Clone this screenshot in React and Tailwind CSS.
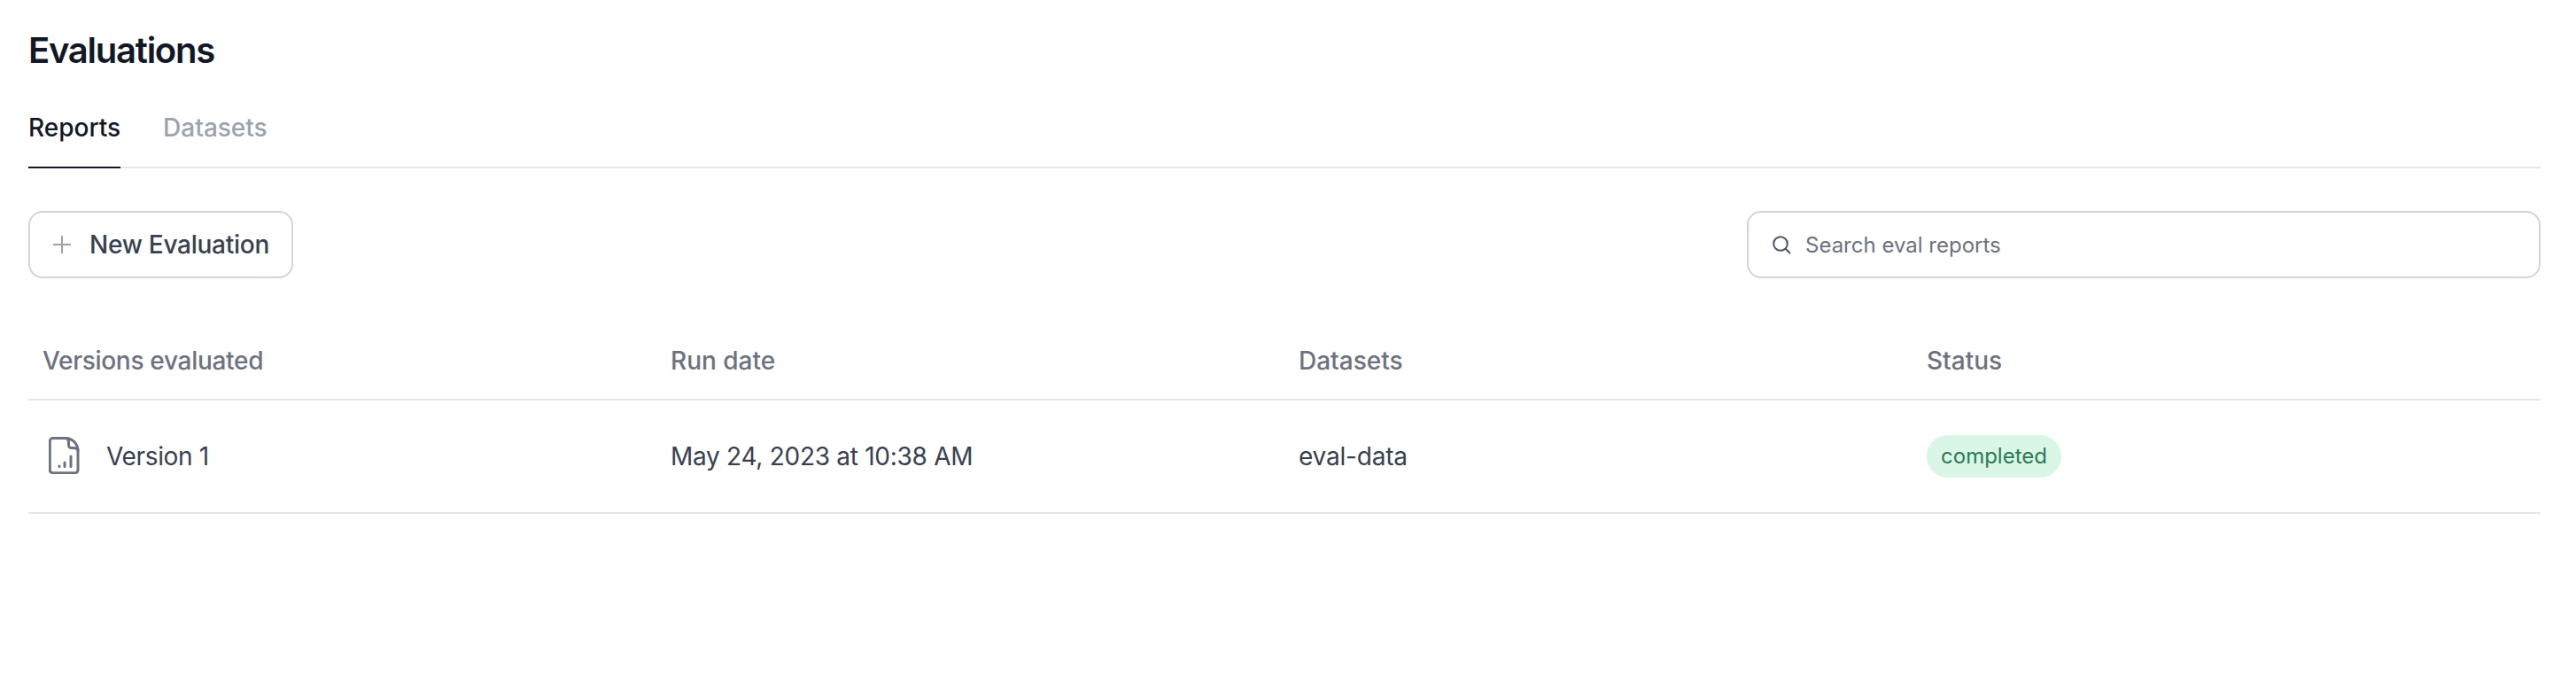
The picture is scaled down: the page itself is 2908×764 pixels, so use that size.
export default function App() {
  return (
    <div className="min-h-[764px] bg-white pl-8 pr-10 font-['Inter',sans-serif]">
      <h1 className="pt-[33px] text-[40px] font-semibold leading-[48px] tracking-[-1.25px] text-[#111827]">Evaluations</h1>

      <div className="mt-[31px] flex h-[78px] gap-12 border-b-2 border-[#e5e7eb]">
        <div className="h-[78px] border-b-2 border-[#111827] pt-[14px] text-[28px] font-medium leading-[36px] text-[#111827]">Reports</div>
        <div className="pt-[14px] text-[28px] font-medium leading-[36px] text-[#9ca3af]">Datasets</div>
      </div>

      <div className="mt-[48px] flex items-center justify-between">
        <button className="flex h-[76px] w-[299px] items-center gap-[19px] rounded-2xl border-2 border-[#d1d5db] bg-white pl-6 text-[28px] font-medium tracking-[-0.26px] text-[#374151]">
          <svg width="24" height="24" viewBox="0 0 24 24" fill="none" stroke="#9ca3af" strokeWidth="2">
            <path d="M12 2v20M2 12h20" />
          </svg>
          New Evaluation
        </button>
        <div className="flex h-[76px] w-[896px] items-center gap-4 rounded-2xl border-2 border-[#d1d5db] bg-white pl-[26px] text-[24px] text-[#6b7280]">
          <svg width="22" height="22" viewBox="0 0 22 22" fill="none" stroke="#4b5563" strokeWidth="2" strokeLinecap="round">
            <circle cx="10" cy="10" r="7.8" />
            <path d="M15.800 15.800 20.500 20.500" />
          </svg>
          <span className="pt-[2px]">Search eval reports</span>
        </div>
      </div>

      <div className="mt-[44px] grid h-[94px] grid-cols-4 items-center border-b-2 border-[#e5e7eb] pt-[6px] text-[28px] font-medium text-[#6b7280]">
        <div className="pl-4 tracking-[-0.3px]">Versions evaluated</div>
        <div className="pl-4">Run date</div>
        <div className="pl-4">Datasets</div>
        <div className="pl-4">Status</div>
      </div>

      <div className="grid h-[128px] grid-cols-4 items-center border-b-2 border-[#e5e7eb] text-[28px] text-[#374151]">
        <div className="flex items-center gap-[29px] pl-[23px]">
          <svg className="mb-[2px]" width="36" height="42" viewBox="0 0 36 42" fill="none" stroke="#6b7280" strokeWidth="3" strokeLinecap="round" strokeLinejoin="round">
            <path d="M4.500 1.500H19C27 1.500 33 8 33 16V37.500a3.200 3.200 0 0 1-3.200 3.200H4.500a3.200 3.200 0 0 1-3.200-3.200V4.700a3.200 3.200 0 0 1 3.200-3.200Z" />
            <path d="M20.500 1.500c1.500 1 2 3 2 5v3a3 3 0 0 0 3 3h3c2 0 3.500.5 4.500 2.500" />
            <path d="M12 33v.4M18 29v4.400M25 22v11.400" />
          </svg>
          <span className="tracking-[-0.35px]">Version 1</span>
        </div>
        <div className="pl-4 tracking-[-0.28px]">May 24, 2023 at 10:38 AM</div>
        <div className="pl-4 tracking-[-0.2px]">eval-data</div>
        <div className="pl-4">
          <span className="inline-flex h-12 w-[152px] items-center justify-center rounded-full bg-[#daf6e6] text-[24px] text-[#2b7a55]">completed</span>
        </div>
      </div>
    </div>
  );
}
